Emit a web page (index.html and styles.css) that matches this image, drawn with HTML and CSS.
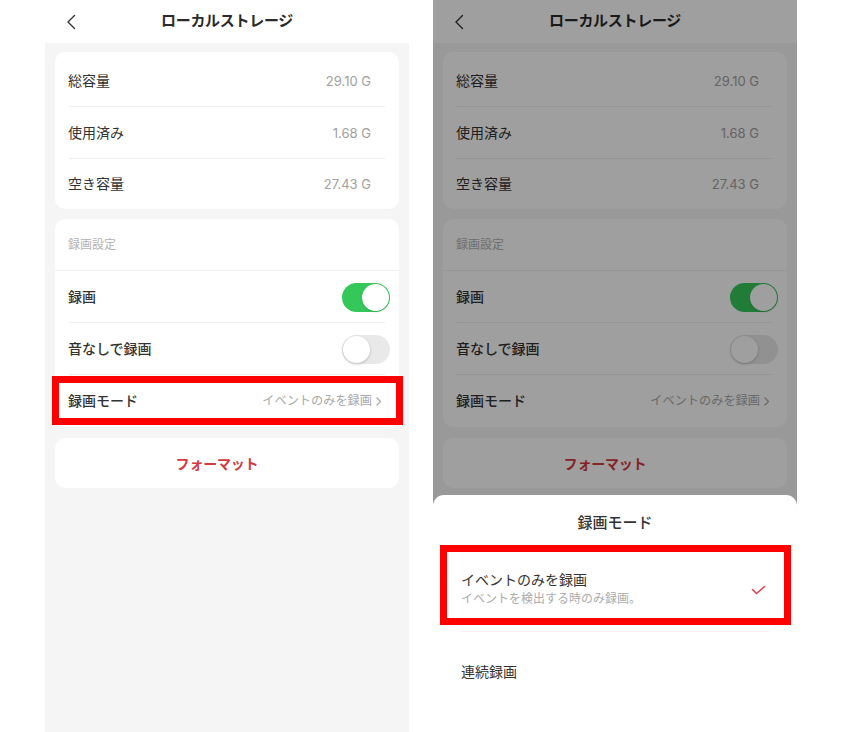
FILE: index.html
```html
<!DOCTYPE html>
<html lang="ja">
<head>
<meta charset="utf-8">
<title>ローカルストレージ</title>
<link rel="stylesheet" href="styles.css">
</head>
<body>
<div class="stage">

  <!-- Screen 1: storage settings -->
  <section class="phone">
    <header class="nav">
      <svg class="nav-back" width="14" height="16" viewBox="0 0 14 16"><path d="M9.5 1.5 L3 8 L9.5 14.5" fill="none" stroke="#333" stroke-width="1.4" stroke-linecap="round" stroke-linejoin="round"/></svg>
      <h1 class="nav-title">ローカルストレージ</h1>
    </header>
    <main class="content">
      <div class="card card-storage">
        <div class="row"><span class="label">総容量</span><span class="value">29.10 G</span></div>
        <div class="row"><span class="label">使用済み</span><span class="value">1.68 G</span></div>
        <div class="row"><span class="label">空き容量</span><span class="value">27.43 G</span></div>
      </div>
      <div class="card card-rec">
        <div class="card-head">録画設定</div>
        <div class="row"><span class="label strong">録画</span><span class="switch on"></span></div>
        <div class="row"><span class="label strong">音なしで録画</span><span class="switch"></span></div>
        <div class="row row-link"><span class="label strong">録画モード</span><span class="value small">イベントのみを録画<svg class="chev" width="6" height="9" viewBox="0 0 6 9"><path d="M1 1 L4.5 4.5 L1 8" fill="none" stroke="#a8a8a8" stroke-width="1.2" stroke-linecap="round" stroke-linejoin="round"/></svg></span><span class="mark"></span></div>
      </div>
      <div class="card card-action">フォーマット</div>
    </main>
  </section>

  <!-- Screen 2: recording mode sheet -->
  <section class="phone">
    <header class="nav">
      <svg class="nav-back" width="14" height="16" viewBox="0 0 14 16"><path d="M9.5 1.5 L3 8 L9.5 14.5" fill="none" stroke="#333" stroke-width="1.4" stroke-linecap="round" stroke-linejoin="round"/></svg>
      <h1 class="nav-title">ローカルストレージ</h1>
    </header>
    <main class="content">
      <div class="card card-storage">
        <div class="row"><span class="label">総容量</span><span class="value">29.10 G</span></div>
        <div class="row"><span class="label">使用済み</span><span class="value">1.68 G</span></div>
        <div class="row"><span class="label">空き容量</span><span class="value">27.43 G</span></div>
      </div>
      <div class="card card-rec">
        <div class="card-head">録画設定</div>
        <div class="row"><span class="label strong">録画</span><span class="switch on"></span></div>
        <div class="row"><span class="label strong">音なしで録画</span><span class="switch"></span></div>
        <div class="row row-link"><span class="label strong">録画モード</span><span class="value small">イベントのみを録画<svg class="chev" width="6" height="9" viewBox="0 0 6 9"><path d="M1 1 L4.5 4.5 L1 8" fill="none" stroke="#a8a8a8" stroke-width="1.2" stroke-linecap="round" stroke-linejoin="round"/></svg></span></div>
      </div>
      <div class="card card-action">フォーマット</div>
    </main>

    <div class="scrim"></div>
    <div class="sheet">
      <div class="sheet-title">録画モード</div>
      <div class="option option-selected">
        <div class="option-text">
          <span class="option-name">イベントのみを録画</span>
          <span class="option-desc">イベントを検出する時のみ録画。</span>
        </div>
        <svg class="check" width="15" height="10" viewBox="0 0 15 10"><path d="M1.5 4.5 L5.5 8.5 L13.5 1.5" fill="none" stroke="#e0424c" stroke-width="1.6" stroke-linecap="round" stroke-linejoin="round"/></svg>
        <span class="mark"></span>
      </div>
      <div class="option">
        <div class="option-text">
          <span class="option-name">連続録画</span>
        </div>
      </div>
    </div>
  </section>

</div>
</body>
</html>
```

FILE: styles.css
```css
* {
  box-sizing: border-box;
}

html, body {
  margin: 0;
  padding: 0;
  background: #ffffff;
}

body {
  font-family: Inter, "Noto Sans CJK JP", sans-serif;
  color: #333333;
  -webkit-font-smoothing: antialiased;
}

.stage {
  display: flex;
  gap: 24px;
  padding-left: 45px;
  height: 732px;
  overflow: hidden;
}

.phone {
  position: relative;
  width: 364px;
  height: 732px;
  background: #f5f5f5;
  overflow: hidden;
}

/* top navigation bar */
.nav {
  position: relative;
  height: 43px;
  background: #ffffff;
  display: flex;
  align-items: center;
  justify-content: center;
}

.nav-back {
  position: absolute;
  left: 20px;
  top: 14px;
}

.nav-title {
  margin: 0;
  font-size: 15px;
  line-height: 20px;
  font-weight: 700;
  color: #2b2b2b;
  letter-spacing: -0.3px;
  padding-bottom: 1px;
}

.content {
  display: flex;
  flex-direction: column;
  padding: 9px 10px 0;
}

.card {
  background: #ffffff;
  border-radius: 10px;
}

.card + .card {
  margin-top: 10px;
}

.row {
  position: relative;
  display: flex;
  align-items: center;
  justify-content: space-between;
  height: 52px;
  padding: 0 9px 0 13px;
}

.row::after {
  content: "";
  position: absolute;
  left: 14px;
  right: 14px;
  bottom: 0;
  height: 1px;
  background: #efefef;
}

.row:last-child::after {
  display: none;
}

.label {
  font-size: 14px;
  line-height: 20px;
  color: #333333;
}

.label.strong {
  font-weight: 500;
}

.value {
  font-size: 13px;
  line-height: 20px;
  color: #a0a0a0;
}

.card-storage {
  padding-top: 2px;
}

.card-storage .row {
  padding-right: 28px;
}

.card-storage .row:first-child {
  height: 53px;
}

.card-storage .row:last-child {
  height: 50px;
}

.card-head {
  height: 52px;
  display: flex;
  align-items: center;
  padding-left: 13px;
  font-size: 12px;
  line-height: 18px;
  color: #b3b3b3;
  border-bottom: 1px solid #f0f0f0;
}

.row-link {
  padding-right: 17px;
}

.value.small {
  display: flex;
  align-items: center;
  gap: 4px;
  font-size: 12.2px;
  color: #a8a8a8;
}

.chev {
  margin-top: 1px;
}

/* iOS style switch */
.switch {
  position: relative;
  width: 48px;
  height: 29px;
  border-radius: 15px;
  background: #e9e9ea;
}

.switch::before {
  content: "";
  position: absolute;
  left: 1px;
  top: 1px;
  width: 27px;
  height: 27px;
  border-radius: 50%;
  background: #ffffff;
  box-shadow: 0 1px 3px rgba(0, 0, 0, 0.22);
}

.switch.on {
  background: #34c759;
}

.switch.on::before {
  left: 20px;
  box-shadow: 0 1px 2px rgba(0, 0, 0, 0.15);
}

.card-action {
  margin-top: 11px !important;
  height: 50px;
  display: flex;
  align-items: center;
  justify-content: center;
  padding-right: 20px;
  font-size: 14px;
  font-weight: 700;
  color: #d9373f;
  letter-spacing: -0.2px;
}

/* red annotation frame */
.mark {
  position: absolute;
  border: 7px solid #ff0000;
  pointer-events: none;
}

.row-link .mark {
  top: 1px;
  bottom: 2px;
  left: -3px;
  right: -4px;
}

/* dimmed backdrop and bottom sheet */
.scrim {
  position: absolute;
  inset: 0;
  background: rgba(0, 0, 0, 0.375);
}

.sheet {
  position: absolute;
  left: 0;
  right: 0;
  bottom: 0;
  height: 237px;
  background: #ffffff;
  border-radius: 11px 11px 0 0;
  display: flex;
  flex-direction: column;
}

.sheet-title {
  height: 50px;
  padding-top: 6px;
  display: flex;
  align-items: center;
  justify-content: center;
  font-size: 15px;
  line-height: 20px;
  font-weight: 500;
  color: #333333;
}

.option {
  position: relative;
  display: flex;
  align-items: center;
  justify-content: space-between;
  height: 80px;
  padding: 0 31px 0 28px;
}

.option-selected {
  height: 87px;
}

.option-selected::after {
  content: "";
  position: absolute;
  left: 28px;
  right: 28px;
  bottom: 0;
  height: 1px;
  background: #f3f3f3;
}

.option-text {
  display: flex;
  flex-direction: column;
  gap: 0;
}

.option-name {
  font-size: 14px;
  line-height: 20px;
  color: #333333;
}

.option-desc {
  font-size: 12px;
  line-height: 18px;
  color: #acacac;
}

.check {
  margin-top: 2px;
}

.option-selected .mark {
  top: 0;
  bottom: 7px;
  left: 7px;
  right: 6px;
}
```
